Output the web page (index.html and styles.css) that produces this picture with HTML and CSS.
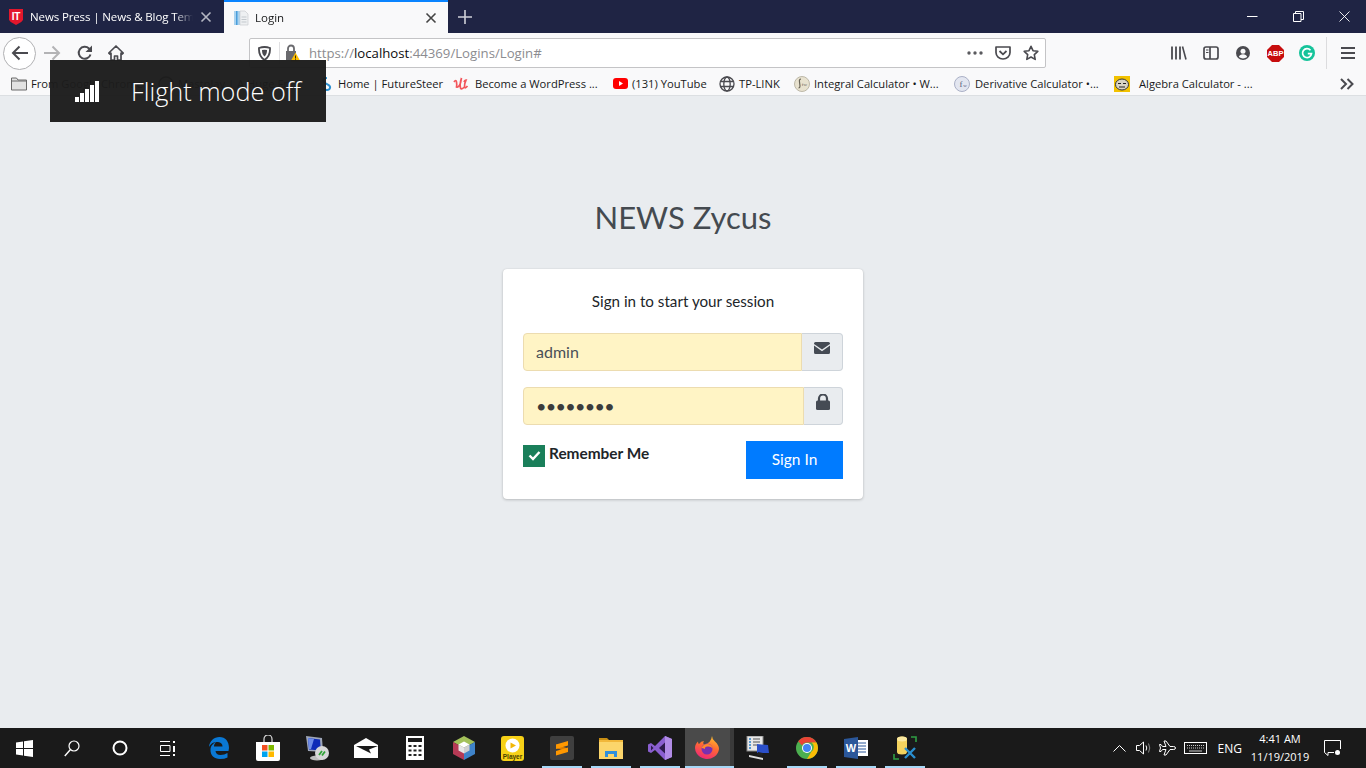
FILE: index.html
```html
<!DOCTYPE html>
<html lang="en">
<head>
<meta charset="utf-8">
<title>Login</title>
<link rel="stylesheet" href="styles.css">
</head>
<body>
<div class="app">
  <header class="tabbar">
    <div class="tab tab-off">
      <svg class="fav" width="16" height="16" viewBox="0 0 16 16"><path d="M1 0h14v10.500q0 2-7 5.500q-7-3.500-7-5.500z" fill="#e3172c"/><text x="8" y="11" font-size="10" font-weight="700" font-family="Liberation Sans" fill="#fff" text-anchor="middle">IT</text></svg>
      <span class="tab-title">News Press | News &amp; Blog Template</span>
      <svg class="close" width="12" height="12" viewBox="0 0 12 12"><path d="M1.500 1.500l9 9M10.500 1.500l-9 9" stroke="#b4b6c2" stroke-width="1.600"/></svg>
    </div>
    <div class="tab tab-on">
      <svg class="fav" width="16" height="16" viewBox="0 0 16 16"><path d="M1 1h6v14H1z" fill="#a9d2ef"/><path d="M3 1h1.500v14H3z" fill="#4a9edb"/><path d="M7 1h5l3 3v11H7z" fill="#eef0f2" stroke="#c8ccd0" stroke-width=".7"/><path d="M8.500 7h5M8.500 9.500h5M8.500 12h5" stroke="#c3c8cd"/></svg>
      <span class="tab-title">Login</span>
      <svg class="close" width="12" height="12" viewBox="0 0 12 12"><path d="M1.500 1.500l9 9M10.500 1.500l-9 9" stroke="#444" stroke-width="1.600"/></svg>
    </div>
    <svg class="newtab" width="14" height="14" viewBox="0 0 14 14"><path d="M7 0v14M0 7h14" stroke="#cfd0d8" stroke-width="1.600"/></svg>
    <div class="winctl">
      <svg width="11" height="11" viewBox="0 0 11 11"><path d="M0 5.500h10.500" stroke="#fff"/></svg>
      <svg width="11" height="11" viewBox="0 0 11 11"><path d="M.5 2.500h7.500v8H.5zM2.500 2.500V.5h8v8H8" fill="none" stroke="#fff"/></svg>
      <svg width="11" height="11" viewBox="0 0 11 11"><path d="M.5.500l10 10M10.500.500l-10 10" stroke="#fff" stroke-width=".9"/></svg>
    </div>
  </header>

  <nav class="navbar">
    <div class="navbtns">
      <span class="backbtn"><svg width="18" height="16" viewBox="0 0 18 16"><path d="M17 8H2M8.500 1.500L2 8l6.500 6.500" fill="none" stroke="#4a4a4f" stroke-width="2"/></svg></span>
      <svg class="fwd" width="18" height="16" viewBox="0 0 18 16"><path d="M1 8h15M9.500 1.500L16 8l-6.500 6.500" fill="none" stroke="#b3b3b5" stroke-width="2"/></svg>
      <svg class="reload" width="16" height="16" viewBox="0 0 16 16"><path d="M13.500 9.500A6 6 0 1 1 12 3.500L14.500 6" fill="none" stroke="#4a4a4f" stroke-width="2"/><path d="M15 .5V7H8.500z" fill="#4a4a4f"/></svg>
      <svg class="home" width="16" height="16" viewBox="0 0 16 16"><path d="M8 1L.8 8l1.200 1.100L3 8.200V15h3.500v-4h3v4H13V8.200l1 .9L15.200 8z" fill="none" stroke="#4a4a4f" stroke-width="1.700" stroke-linejoin="round"/></svg>
    </div>
    <div class="urlbar">
      <svg class="shield" width="13" height="15" viewBox="0 0 13 15"><path d="M1 2q5.500-2 11 0q.5 8-5.500 12Q.5 10 1 2z" fill="none" stroke="#4a4a4f" stroke-width="1.800"/><path d="M4 4q2.500-.7 5 0q0 4.500-2.500 6.500Q4 8.500 4 4z" fill="#4a4a4f"/></svg>
      <span class="urlsep"></span>
      <svg class="lock" width="16" height="18" viewBox="0 0 16 18"><path d="M1 7h10v9H1z" fill="#6a6a6e"/><path d="M3 7V4.500a3 3 0 0 1 6 0V7" fill="none" stroke="#6a6a6e" stroke-width="1.800"/><path d="M10.500 8.500l5 9h-10z" fill="#ffbf00"/><path d="M10.500 11.500v3M10.500 15.300v1" stroke="#40300a"/></svg>
      <span class="urltext"><span class="dim">https://</span>localhost<span class="dim">:44369/Logins/Login#</span></span>
      <svg class="dots" width="16" height="4" viewBox="0 0 16 4"><circle cx="2" cy="2" r="1.700"/><circle cx="8" cy="2" r="1.700"/><circle cx="14" cy="2" r="1.700"/></svg>
      <svg class="pocket" width="16" height="14" viewBox="0 0 16 14"><path d="M1 1h14v5.500a7 6.500 0 0 1-14 0z" fill="none" stroke="#4a4a4f" stroke-width="1.700" stroke-linejoin="round"/><path d="M4.500 5L8 8.300 11.500 5" fill="none" stroke="#4a4a4f" stroke-width="1.800"/></svg>
      <svg class="star" width="16" height="16" viewBox="0 0 16 16"><path d="M8 1.300l2 4.400 4.800.6-3.500 3.300.9 4.800L8 12l-4.200 2.400.9-4.800L1.200 6.300 6 5.700z" fill="none" stroke="#4a4a4f" stroke-width="1.600" stroke-linejoin="round"/></svg>
    </div>
    <div class="tools">
      <svg class="t-lib" width="16" height="14" viewBox="0 0 16 14"><path d="M1 .5v13M5 .5v13M9 .5v13" stroke="#4a4a4f" stroke-width="1.800"/><path d="M11.500.500l3.500 13" stroke="#4a4a4f" stroke-width="1.600"/></svg>
      <svg class="t-side" width="16" height="14" viewBox="0 0 16 14"><rect x="1" y="1" width="14" height="12" rx="2" fill="none" stroke="#4a4a4f" stroke-width="1.700"/><path d="M7 1v12" stroke="#4a4a4f" stroke-width="1.700"/><path d="M3 4h2.500M3 6.500h2.500" stroke="#4a4a4f" stroke-width="1.200"/></svg>
      <svg class="t-acc" width="14" height="14" viewBox="0 0 14 14"><circle cx="7" cy="7" r="7" fill="#4a4a4f"/><circle cx="7" cy="5.300" r="2.500" fill="#f9f9fa"/><path d="M2.800 11q1-2.700 4.200-2.700t4.200 2.700q-4.200 2.800-8.400 0z" fill="#f9f9fa"/></svg>
      <svg class="t-abp" width="17" height="17" viewBox="0 0 17 17"><path d="M5 0h7l5 5v7l-5 5H5l-5-5V5z" fill="#c70d0d"/><text x="8.500" y="11.200" font-size="7.500" font-weight="700" font-family="Liberation Sans" fill="#fff" text-anchor="middle">ABP</text></svg>
      <svg class="t-gr" width="16" height="16" viewBox="0 0 16 16"><circle cx="8" cy="8" r="8" fill="#15c39a"/><path d="M11.500 5.200A4.500 4.500 0 1 0 12.500 8.700H8.800" fill="none" stroke="#fff" stroke-width="1.700"/></svg>
      <span class="toolsep"></span>
      <svg class="t-menu" width="14" height="12" viewBox="0 0 14 12"><path d="M0 1h14M0 6h14M0 11h14" stroke="#4a4a4f" stroke-width="1.800"/></svg>
    </div>
  </nav>

  <div class="bookmarks">
    <div class="bm">
      <svg width="16" height="14" viewBox="0 0 16 14"><path d="M.5 1h5l1.500 2h8.500v10H.5z" fill="#e2e2e2" stroke="#6a6a6a"/><path d="M.5 4h15" stroke="#6a6a6a"/></svg>
      <span>From Google Chrome</span>
    </div>
    <div class="bm">
      <svg width="16" height="16" viewBox="0 0 16 16"><circle cx="8" cy="8" r="7" fill="none" stroke="#444" stroke-width="1.500"/></svg>
      <span>Mastplay | A Huge Fr...</span>
    </div>
    <div class="bm">
      <svg width="14" height="14" viewBox="0 0 14 14"><path d="M7 1C3 1 2 4 5 6s6 2 5 5-5 2-6 1" fill="none" stroke="#2a8fd0" stroke-width="2"/></svg>
      <span>Home | FutureSteer</span>
    </div>
    <div class="bm bm-become">
      <svg width="16" height="14" viewBox="0 0 16 14"><path d="M1 5q2-3 2.500 0t0 5q2 1 4-4l1-5q-2 6-1 10 1 2 4-1M11 5q.5-2 2-2-1.500 3-1.500 7 .5 2 3-1" fill="none" stroke="#f2565b" stroke-width="1.700"/></svg>
      <span>Become a WordPress ...</span>
    </div>
    <div class="bm">
      <svg width="15" height="11" viewBox="0 0 15 11"><rect width="15" height="11" rx="3" fill="#f00"/><path d="M6 3l4 2.500L6 8z" fill="#fff"/></svg>
      <span>(131) YouTube</span>
    </div>
    <div class="bm">
      <svg width="16" height="16" viewBox="0 0 16 16"><g fill="none" stroke="#4a4a4f" stroke-width="1.300"><circle cx="8" cy="8" r="7"/><ellipse cx="8" cy="8" rx="3.200" ry="7"/><path d="M1.500 5.500h13M1.500 10.500h13"/></g></svg>
      <span>TP-LINK</span>
    </div>
    <div class="bm">
      <svg width="16" height="16" viewBox="0 0 16 16"><circle cx="8" cy="8" r="7.500" fill="#e8e2cf" stroke="#bdb8a8"/><path d="M7 3q-2 0-1.500 3l.5 4q0 2-1.500 2" fill="none" stroke="#6a6558" stroke-width="1.200"/><text x="10.500" y="10" font-size="5" font-family="Liberation Serif" fill="#6a6558" text-anchor="middle">fw</text></svg>
      <span>Integral Calculator • W...</span>
    </div>
    <div class="bm bm-deriv">
      <svg width="16" height="16" viewBox="0 0 16 16"><circle cx="8" cy="8" r="7.500" fill="#e3e6f0" stroke="#aab0c6"/><text x="7" y="11" font-size="9" font-family="Liberation Serif" fill="#55597a" text-anchor="middle">f</text><text x="11" y="11" font-size="5" font-family="Liberation Serif" fill="#55597a" text-anchor="middle">w</text></svg>
      <span>Derivative Calculator •...</span>
    </div>
    <div class="bm bm-wide">
      <svg width="16" height="16" viewBox="0 0 16 16"><rect width="16" height="16" fill="#f2c200"/><ellipse cx="8" cy="8.500" rx="6.500" ry="5.500" fill="#d8d4c4" stroke="#333"/><path d="M4 7.500h3M9 7.500h3M5 11h6" stroke="#222" stroke-width="1.200"/></svg>
      <span>Algebra Calculator - ...</span>
    </div>
    <svg class="more" width="14" height="12" viewBox="0 0 14 12"><path d="M1 1l5 5-5 5M7.500 1l5 5-5 5" fill="none" stroke="#4a4a4f" stroke-width="2"/></svg>
  </div>

  <main class="main">
    <h1 class="logo">NEWS Zycus</h1>
    <form class="card" action="#">
      <p class="msg">Sign in to start your session</p>
      <div class="group">
        <input class="field" type="text" value="admin">
        <span class="addon addon-mail"><svg width="16" height="12" viewBox="0 0 16 12"><path d="M1.500 0h13A1.500 1.500 0 0 1 16 1.500v.4L8 7.500 0 1.900v-.4A1.500 1.500 0 0 1 1.500 0z" fill="#454b54"/><path d="M0 3.600l8 5.600 8-5.600v6.900a1.500 1.500 0 0 1-1.500 1.500h-13A1.500 1.500 0 0 1 0 10.500z" fill="#454b54"/></svg></span>
      </div>
      <div class="group">
        <input class="field field-pw" type="password" value="password">
        <span class="addon addon-lock"><svg width="14" height="16" viewBox="0 0 14 16"><path d="M3 7V4.500a4 4 0 0 1 8 0V7" fill="none" stroke="#454b54" stroke-width="2.200"/><rect y="6.500" width="14" height="9.500" rx="1.500" fill="#454b54"/></svg></span>
      </div>
      <div class="actions">
        <label class="remember">
          <span class="check"><svg width="13" height="11" viewBox="0 0 13 11"><path d="M1.500 5.500l3.500 3.500 6.500-7" fill="none" stroke="#fff" stroke-width="2.400"/></svg></span>
          <span class="remember-text">Remember Me</span>
        </label>
        <button class="signin" type="button">Sign In</button>
      </div>
    </form>
  </main>

  <footer class="taskbar">
    <div class="shell">
      <span class="task"><svg width="17" height="17" viewBox="0 0 17 17" fill="#fff"><path d="M0 2.400l7-1v6.600H0zM8 1.200L17 0v8H8zM0 9h7v6.600l-7-1zM8 9h9v8l-9-1.200z"/></svg></span>
      <span class="task"><svg width="16" height="17" viewBox="0 0 16 17"><circle cx="10" cy="6" r="5" fill="none" stroke="#fff" stroke-width="1.200"/><path d="M6.500 9.500L.8 16" stroke="#fff" stroke-width="1.400"/></svg></span>
      <span class="task"><svg width="16" height="16" viewBox="0 0 16 16"><circle cx="8" cy="8" r="6.500" fill="none" stroke="#fff" stroke-width="2"/></svg></span>
      <span class="task"><svg width="16" height="15" viewBox="0 0 16 15"><path d="M0 .5h10M0 14.500h10M.5 4.500h9.500v6H.5z" fill="none" stroke="#fff"/><path d="M14 0v2M14 5v6M14 13v2" stroke="#fff" stroke-width="2"/></svg></span>
    </div>
    <div class="apps">
      <span class="task"><svg width="20" height="22" viewBox="0 0 20 22"><path d="M19.500 14H6.500q.5 4 5 4 4 0 7-2v4.500q-3 1.500-7.500 1.500C5 22 1.500 18.500 1.500 13 1.500 9 4 6.500 7 5 5.500 6.500 5 8 5 9.500h8.500q0-4-4.500-4.500C5 4.500 1.500 6.500 0 10 .5 4 5 0 10.500 0 16.500 0 20 4.500 20 11z" fill="#0a78d4"/></svg></span>
      <span class="task"><svg width="24" height="26" viewBox="0 0 24 26"><path d="M8 7V4a4 4 0 0 1 8 0v3" fill="none" stroke="#ddd" stroke-width="1.200"/><path d="M0 7h24v17a2 2 0 0 1-2 2H2a2 2 0 0 1-2-2z" fill="#fff"/><path d="M6 10h5.500v5.500H6z" fill="#f25022"/><path d="M12.500 10H18v5.500h-5.500z" fill="#7fba00"/><path d="M6 16.500h5.500V22H6z" fill="#00a4ef"/><path d="M12.500 16.500H18V22h-5.500z" fill="#ffb900"/></svg></span>
      <span class="task"><svg width="24" height="26" viewBox="0 0 24 26"><path d="M1 1l16 2 1 14-15-1z" fill="#9ea6b8"/><path d="M3 3l12 1.500.8 11L4 14.500z" fill="#0e2bb8"/><path d="M3 3l6 1-3 10H4z" fill="#6f8de8"/><ellipse cx="12" cy="23" rx="7" ry="2.500" fill="#bdbdbd"/><circle cx="17" cy="18" r="7" fill="#d8d8d8"/><path d="M14 20l3-4M17 20.500l3-4" stroke="#2fa336" stroke-width="1.800"/></svg></span>
      <span class="task"><svg width="24" height="20" viewBox="0 0 24 20"><path d="M0 7L12 0l12 7v13H0z" fill="#fff"/><path d="M2 8h22l-9 3.500 2 4z" fill="#1a1a1a"/></svg></span>
      <span class="task"><svg width="18" height="24" viewBox="0 0 18 24"><rect width="18" height="24" fill="#fff"/><rect x="2" y="2" width="14" height="4" fill="#1b1b1b"/><path d="M2.500 10h3M7.500 10h3M12.500 10h3M2.500 14.500h3M7.500 14.500h3M12.500 14.500h3M2.500 19h3M7.500 19h3M12.500 19h3" stroke="#222" stroke-width="2"/></svg></span>
      <span class="task"><svg width="22" height="24" viewBox="0 0 22 24"><path d="M11 0l11 6-11 6L0 6z" fill="#a3c15a"/><path d="M0 6l11 6v12L0 18z" fill="#b63a55"/><path d="M22 6l-11 6v12l11-6z" fill="#3f83c9"/><path d="M11 5.500l5.500 3-5.500 3-5.500-3z" fill="#fff"/><path d="M5.500 8.500l5.500 3v6l-5.500-3z" fill="#e6e6e6"/><path d="M16.500 8.500l-5.500 3v6l5.500-3z" fill="#cfcfcf"/></svg></span>
      <span class="task"><svg width="23" height="25" viewBox="0 0 23 25"><rect width="23" height="25" rx="3" fill="#f7d117"/><circle cx="11.500" cy="9.500" r="7" fill="#fff"/><path d="M9.500 6.500l5.500 3-5.500 3z" fill="#f2b705"/><text x="11.500" y="22.500" font-size="6.500" font-weight="700" font-family="Liberation Sans" fill="#4a3f00" text-anchor="middle">Player</text></svg></span>
      <span class="task running"><svg width="24" height="24" viewBox="0 0 24 24"><rect width="24" height="24" rx="2" fill="#3f3f3f"/><path d="M6 8.500l12 4V16L6 12z" fill="#d97b00"/><path d="M6 8.500L18 5v4.500L6 13zM18 11.500V16L6 19.500V15z" fill="#ff9800"/></svg></span>
      <span class="task running"><svg width="24" height="22" viewBox="0 0 24 22"><path d="M0 1h8l2 2h-10z" fill="#c98f14"/><path d="M0 3h24v19H0z" fill="#fbd56b"/><path d="M0 3h24v2H0z" fill="#f1b73a"/><path d="M6 20v-6h12v6h-3v-3H9v3z" fill="#2f8fdc"/></svg></span>
      <span class="task running stacked"><svg width="24" height="24" viewBox="0 0 24 24"><path d="M17 0l7 3v18l-7 3L7 14l-4 3-3-1.500V8.500L3 7l4 3z" fill="#8a5fd0"/><path d="M17 6.500L11 12l6 5.500z" fill="#2d1b4d"/><path d="M3 9.500v5L5.500 12z" fill="#2d1b4d"/><path d="M17 0l7 3v18l-7 3z" fill="#b18ce6"/></svg></span>
      <span class="task running active"><svg width="24" height="24" viewBox="0 0 24 24"><defs><linearGradient id="fx" x1=".7" y1="0" x2=".3" y2="1"><stop offset="0" stop-color="#ffc02e"/><stop offset=".45" stop-color="#ff6a32"/><stop offset="1" stop-color="#f0247a"/></linearGradient></defs><path d="M17 0q0 3 3 5.500 4 3.500 4 7.500a12 11 0 1 1-23.500-4q1-2.500 2.500-3.500 0 2 1 2.500 2-3 5-3-1.500 2 0 3.500 7-1 8-8.500z" fill="url(#fx)"/><circle cx="12" cy="13" r="5.500" fill="#7a2fb0"/><path d="M6.500 12q2-4.500 6.500-4 4 .5 4.500 4.500-1.500-2.500-5-2-3 0-2.500 2.500-2-1-3.500-1z" fill="#ff8a2a"/></svg></span>
      <span class="task"><svg width="24" height="24" viewBox="0 0 24 24"><rect x="1" y="0" width="16" height="15" fill="#e8e8e8" stroke="#8a8a8a"/><path d="M3 3h2M3 6h2M3 9h2M3 12h2" stroke="#2a7fc9" stroke-width="1.500"/><path d="M7 3h7M7 6h7M7 9h4" stroke="#555"/><path d="M11 8l11 1 1 8-12 0z" fill="#2b4fc9"/><path d="M3 19l14 3v2L3 21z" fill="#ddd"/><path d="M12 16l5 1-1 3-5-1z" fill="#222"/></svg></span>
      <span class="task running"><svg width="22" height="22" viewBox="0 0 22 22"><circle cx="11" cy="11" r="11" fill="#4caf50"/><path d="M11 0a11 11 0 0 1 9.500 5.500H11a5.500 5.500 0 0 0-5 3L2.200 4.300A11 11 0 0 1 11 0z" fill="#ea4335"/><path d="M20.500 5.500A11 11 0 0 1 11 22l4.500-7.500a5.500 5.500 0 0 0 0-9z" fill="#fbbc05"/><circle cx="11" cy="11" r="5" fill="#fff"/><circle cx="11" cy="11" r="4" fill="#4285f4"/></svg></span>
      <span class="task running"><svg width="24" height="22" viewBox="0 0 24 22"><path d="M8 3h16v16H8z" fill="#fff"/><path d="M14 6h8M14 9h8M14 12h8M14 15h8" stroke="#2b579a"/><path d="M0 2l14-2v22L0 20z" fill="#2b579a"/><text x="7" y="15" font-size="11" font-weight="700" font-family="Liberation Sans" fill="#fff" text-anchor="middle">W</text></svg></span>
      <span class="task running"><svg width="24" height="24" viewBox="0 0 24 24"><path d="M4 3a5 2.500 0 0 1 10 0v13a5 2.500 0 0 1-10 0z" fill="#f4d35e"/><ellipse cx="9" cy="3" rx="5" ry="2.500" fill="#fbe9a0"/><path d="M1 18v5h5M18 1h5v5" fill="none" stroke="#2f9e44" stroke-width="1.600"/><path d="M12 22L22 12M12 12l10 10" stroke="#2a8fd0" stroke-width="2.400"/></svg></span>
    </div>
    <div class="tray">
      <svg class="tr-caret" width="13" height="7" viewBox="0 0 13 7"><path d="M.5 6.500l6-6 6 6" fill="none" stroke="#fff"/></svg>
      <svg class="tr-vol" width="16" height="14" viewBox="0 0 16 14"><path d="M.5 4.500h3l4-3.500v12l-4-3.500h-3z" fill="none" stroke="#fff"/><path d="M10 4.500q1.500 2.500 0 5" fill="none" stroke="#fff"/><path d="M12.500 2.500q2.500 4.500 0 9" fill="none" stroke="#888"/></svg>
      <svg class="tr-plane" width="17" height="16" viewBox="0 0 17 16"><path d="M16.500 8q0-1.500-2-1.500H11L7 1H5l2 5.500H3.500L2 4.500H.5L1.500 8l-1 3.500H2l1.500-2H7L5 15h2l4-5.500h3.500q2 0 2-1.500z" fill="none" stroke="#fff"/></svg>
      <svg class="tr-kbd" width="23" height="12" viewBox="0 0 23 12"><rect x=".5" y=".5" width="22" height="11" fill="none" stroke="#fff"/><path d="M3 3.500h17M3 6h17" stroke="#ccc" stroke-dasharray="1 1"/><path d="M5 9h13" stroke="#ccc"/></svg>
      <span class="tr-lang">ENG</span>
      <span class="tr-clock"><span>4:41 AM</span><span>11/19/2019</span></span>
      <svg class="tr-note" width="17" height="16" viewBox="0 0 17 16"><path d="M10 12.500H4v3l-3.500-3V.5h16V9" fill="none" stroke="#fff"/><circle cx="13.500" cy="12.500" r="2.500" fill="#fff"/></svg>
    </div>
  </footer>

  <aside class="flight">
    <svg width="24" height="21" viewBox="0 0 24 21" fill="#fff"><path d="M0 16h4v5H0zM5 12h4v9H5zM10 8h4v13h-4zM15 4h4v17h-4zM20 0h4v21h-4z"/></svg>
    <span>Flight mode off</span>
  </aside>
</div>
</body>
</html>
```

FILE: styles.css
```css
* { box-sizing: border-box; }
html, body { margin: 0; height: 100%; overflow: hidden; }
body { font-family: "Open Sans", "Liberation Sans", sans-serif; }
.app { position: relative; width: 1366px; height: 768px; display: flex; flex-direction: column; }

/* tab strip */
.tabbar { height: 33px; flex: none; background: #1f2444; display: flex; align-items: stretch; }
.tab { width: 224px; display: flex; align-items: center; font-size: 11.5px; gap: 5px; overflow: hidden; }
.tab-off { color: #fff; padding: 0 12px 0 8px; letter-spacing: -.12px; }
.tab-off .tab-title { padding-left: 1px; }
.tab-on { background: #f9f9fa; color: #18191a; border-top: 2px solid #0a84ff; padding: 0 11px 0 9px; }
.tab-on .tab-title { padding-left: 1px; }
.fav { flex: none; }
.tab-title { flex: 1; white-space: nowrap; overflow: hidden; -webkit-mask-image: linear-gradient(to left, transparent, #000 18px); mask-image: linear-gradient(to left, transparent, #000 18px); }
.close { flex: none; margin-left: 2px; }
.newtab { align-self: center; margin-left: 10px; }
.winctl { margin-left: auto; display: flex; align-items: center; gap: 35px; padding-right: 16px; }

/* nav bar */
.navbar { height: 37px; flex: none; background: #f9f9fa; display: flex; align-items: center; padding-top: 3px; }
.navbtns { width: 249px; flex: none; display: flex; align-items: center; padding-left: 3px; }
.backbtn { width: 33px; height: 33px; border: 1px solid #b1b1b3; border-radius: 50%; background: #fff; display: flex; align-items: center; justify-content: center; }
.fwd { margin-left: 7px; }
.reload { margin-left: 16px; }
.home { margin-left: 15px; }
.urlbar { width: 797px; height: 30px; flex: none; background: #fff; border: 1px solid #c4c4c6; border-radius: 2px; display: flex; align-items: center; padding-left: 8px; }
.urlsep { width: 1px; height: 22px; background: #e0e0e2; margin-left: 8px; }
.lock { margin-left: 5px; }
.urltext { font-size: 13.2px; color: #0c0c0d; margin-left: 8px; flex: 1; white-space: nowrap; }
.dim { color: #8c8c90; }
.dots { fill: #5a5a5e; margin-right: 12px; }
.pocket { margin-right: 12px; }
.star { margin-right: 6px; }
.tools { flex: 1; display: flex; align-items: center; padding-left: 125px; }
.t-side { margin-left: 16px; }
.t-acc { margin-left: 17px; }
.t-abp { margin-left: 17px; }
.t-gr { margin-left: 15px; }
.toolsep { width: 1px; height: 32px; background: #dcdcde; margin-left: 11px; }
.t-menu { margin-left: 14px; }

/* bookmarks */
.bookmarks { height: 26px; flex: none; background: #f9f9fa; border-bottom: 1px solid #dcdfe2; display: grid; grid-template-columns: 147px 162px 133px 160px 106px 75px 160px 160px 226px 14px; align-items: center; padding: 2px 0 0 11px; }
.bm { display: flex; align-items: center; gap: 4px; font-size: 11.2px; color: #18191a; white-space: nowrap; overflow: hidden; }
.bm-become { gap: 6px; }
.bm-deriv { gap: 5px; }
.bm-wide { gap: 9px; }

/* login */
.main { flex: 1; min-height: 0; background: #e9ecef; display: flex; flex-direction: column; align-items: center; padding-top: 96px; font-family: "Lato", "Open Sans", sans-serif; }
.logo { margin: 0 0 27px; height: 50px; font-size: 31px; line-height: 50px; font-weight: 400; color: #444a50; }
.card { width: 360px; height: 230px; background: #fff; border-radius: 4px; padding: 20px; box-shadow: 0 0 1px rgba(0,0,0,.125), 0 1px 3px rgba(0,0,0,.2); }
.msg { margin: 0 0 20px; height: 24px; line-height: 24px; font-size: 15.2px; text-align: center; color: #212529; }
.group { display: flex; height: 38px; margin-bottom: 16px; }
.field { flex: 1; min-width: 0; height: 38px; background: #fff4c5; border: 1px solid #ecdcb0; border-radius: 4px 0 0 4px; padding: 0 12px 2px; font: 16px "Lato", sans-serif; color: #495057; outline: none; }
.field-pw { font-size: 18px; color: #3c3c3c; letter-spacing: -.7px; padding-bottom: 0; }
.addon { flex: none; background: #e9ecef; border: 1px solid #ced4da; border-left: 0; border-radius: 0 4px 4px 0; display: flex; justify-content: center; padding-top: 8px; }
.addon-mail { width: 41px; }
.addon-lock { width: 39px; padding-top: 6px; }
.actions { display: flex; justify-content: space-between; align-items: flex-start; }
.remember { display: flex; align-items: center; gap: 4px; margin-top: 3px; font-size: 15.4px; font-weight: 700; color: #212529; }
.remember-text { padding-bottom: 5px; }
.check { width: 22px; height: 22px; background: #1a7f5a; display: flex; align-items: center; justify-content: center; }
.signin { width: 97px; height: 38px; background: #007bff; color: #fff; border: 0; border-radius: 0; padding: 0 0 2px; font: 15.5px "Lato", sans-serif; }

/* taskbar */
.taskbar { height: 40px; flex: none; background: #1a1a1a; display: flex; }
.shell { display: flex; }
.shell .task { width: 48px; }
.apps { display: flex; margin-left: 3px; }
.task { position: relative; width: 49px; height: 40px; display: flex; align-items: center; justify-content: center; }
.apps .task { padding-right: 2px; }
.running::after { content: ""; position: absolute; left: 4px; right: 5px; bottom: 0; height: 2px; background: #a6d8f7; }
.active { background: #4a4a4a; border-right: 4px solid #3a3a3a; }
.active::after { left: 0; right: -4px; }
.tray { margin-left: auto; display: flex; align-items: center; color: #fff; font-size: 12px; padding-right: 25px; }
.tr-vol { margin-left: 10px; }
.tr-plane { margin-left: 7px; }
.tr-kbd { margin-left: 8px; }
.tr-lang { margin-left: 11px; }
.tr-clock { width: 64px; margin-left: 6px; display: flex; flex-direction: column; align-items: center; line-height: 18px; font-size: 11px; }
.tr-note { margin-left: 12px; }

/* flight mode toast */
.flight { position: absolute; left: 50px; top: 60px; width: 276px; height: 62px; background: rgba(28,28,28,.97); color: #fff; display: flex; align-items: center; padding-left: 25px; gap: 32px; font-size: 25.3px; font-weight: 300; }
```
